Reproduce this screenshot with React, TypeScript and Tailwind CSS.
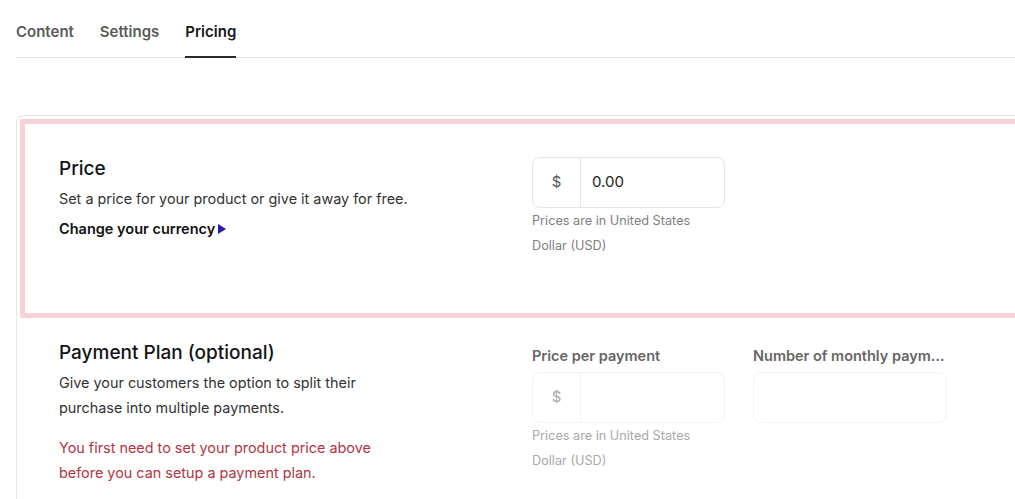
import React from 'react';

const font = { fontFamily: 'Inter, "Noto Sans", sans-serif' };

function Tabs() {
  const tabs = ['Content', 'Settings', 'Pricing'];
  return (
    <div className="flex gap-[26px] border-b border-[#e2e2e2] h-[58px]">
      {tabs.map((t) => (
        <div
          key={t}
          className={
            'pt-[22px] text-[15px] font-semibold leading-[20px] ' +
            (t === 'Pricing'
              ? 'text-[#161616] border-b-2 border-[#2b2b2b] mb-[-1px]'
              : 'text-[#5a5a5a]')
          }
        >
          {t}
        </div>
      ))}
    </div>
  );
}

function MoneyInput({ value, faded }: { value?: string; faded?: boolean }) {
  return (
    <div className="w-[193px]">
      <div
        className={
          'flex h-[51px] rounded-lg border ' +
          (faded ? 'border-[#f3f3f3]' : 'border-[#e4e4e4]')
        }
      >
        <div
          className={
            'w-[48px] flex items-center justify-center text-[15px] border-r ' +
            (faded ? 'text-[#a8a8a8] border-[#f3f3f3]' : 'text-[#555] border-[#e4e4e4]')
          }
        >
          $
        </div>
        <div className="flex items-center pl-[11px] text-[15px] text-[#1c1c1c]">{value}</div>
      </div>
      <p className={'text-[12.7px] leading-[25px] ' + (faded ? 'text-[#a9a9a9]' : 'text-[#808080]')}>
        Prices are in United States
        <br />
        Dollar (USD)
      </p>
    </div>
  );
}

export default function App() {
  return (
    <div className="min-h-[499px] bg-white pl-4 overflow-hidden" style={font}>
      <Tabs />
      <div className="mt-[57px] border-l border-t border-[#e6e6e6] rounded-tl-lg pt-[3px]">
        {/* Price (highlighted) */}
        <section className="ml-[3px] border-[5px] border-r-0 border-[#f6d3d9] grid grid-cols-[473px_1fr] pl-[34px] pt-[32px] pb-[55px]">
          <div>
            <h2 className="text-[19px] font-medium leading-[26px] text-[#141414]">Price</h2>
            <p className="mt-[4px] text-[14.4px] leading-[25px] text-[#333]">
              Set a price for your product or give it away for free.
            </p>
            <button className="mt-[5px] flex items-center gap-[3px] text-[14.5px] font-semibold leading-[25px] text-[#111]">
              Change your currency
              <svg width="8" height="10" viewBox="0 0 8 10" className="mt-[1px]">
                <path d="M0 0 L8 5 L0 10 Z" fill="#2a1b9c" />
              </svg>
            </button>
          </div>
          <div className="pt-[1px]">
            <MoneyInput value="0.00" />
          </div>
        </section>

        {/* Payment plan */}
        <section className="grid grid-cols-[473px_1fr] pl-[42px] pt-[22px] pb-4">
          <div>
            <h2 className="text-[19px] font-medium leading-[26px] text-[#141414]">Payment Plan (optional)</h2>
            <p className="mt-[4px] max-w-[320px] text-[14.4px] leading-[25px] text-[#333]">
              Give your customers the option to split their purchase into multiple payments.
            </p>
            <p className="mt-[15px] max-w-[330px] text-[14.4px] leading-[25px] text-[#b3353f]">
              You first need to set your product price above before you can setup a payment plan.
            </p>
          </div>
          <div className="flex gap-[28px] pt-[6px]">
            <div>
              <div className="text-[14.5px] font-semibold leading-[20px] text-[#666] mb-[6px]">Price per payment</div>
              <MoneyInput faded />
            </div>
            <div className="w-[194px]">
              <div className="text-[14.5px] font-semibold leading-[20px] text-[#666] mb-[6px] whitespace-nowrap overflow-hidden text-ellipsis">
                Number of monthly payments
              </div>
              <div className="h-[51px] rounded-lg border border-[#f3f3f3]" />
            </div>
          </div>
        </section>
      </div>
    </div>
  );
}
